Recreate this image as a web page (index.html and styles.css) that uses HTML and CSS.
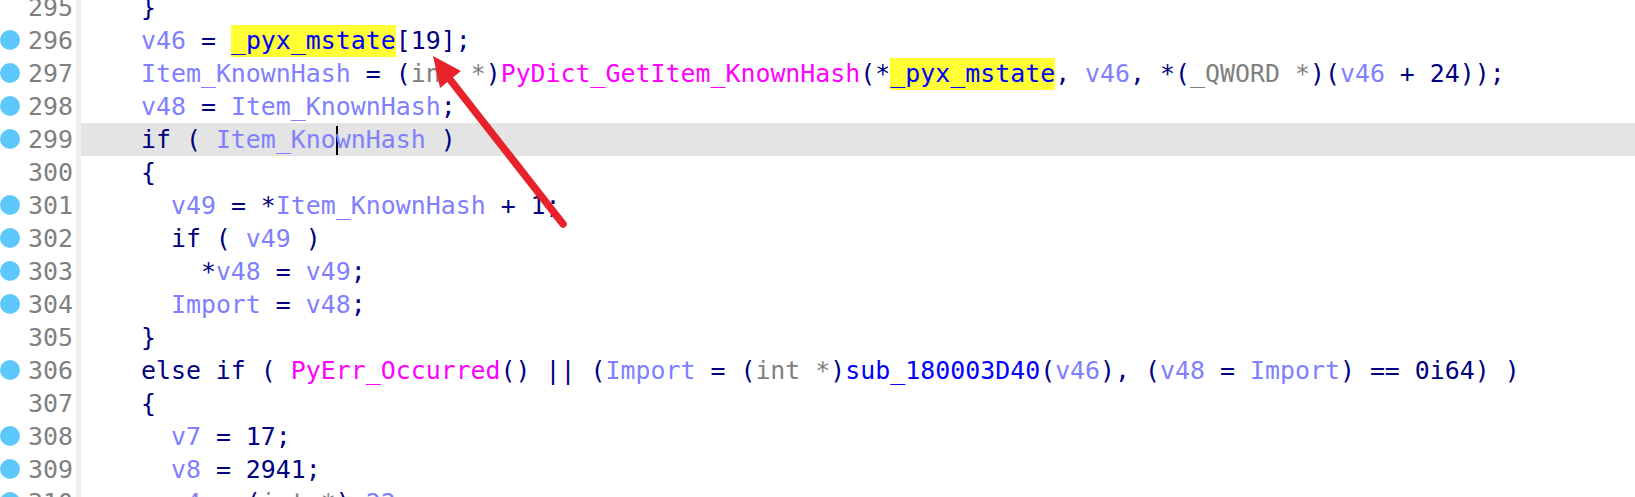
FILE: index.html
```html
<!DOCTYPE html>
<html lang="en">
<head>
    <meta charset="UTF-8">
    <title>Pseudocode</title>
    <link rel="stylesheet" href="styles.css">
</head>
<body>
    <div class="view">
        <div class="lines">
            <div class="row"><span class="gut"><span class="num">295</span></span><span class="code">    }</span></div>
            <div class="row"><span class="gut"><i class="bp"></i><span class="num">296</span></span><span class="code">    <span class="v">v46</span> = <span class="g">_pyx_mstate</span>[19];</span></div>
            <div class="row"><span class="gut"><i class="bp"></i><span class="num">297</span></span><span class="code">    <span class="v">Item_KnownHash</span> = (<span class="t">int *</span>)<span class="f">PyDict_GetItem_KnownHash</span>(*<span class="g">_pyx_mstate</span>, <span class="v">v46</span>, *(<span class="t">_QWORD *</span>)(<span class="v">v46</span> + 24));</span></div>
            <div class="row"><span class="gut"><i class="bp"></i><span class="num">298</span></span><span class="code">    <span class="v">v48</span> = <span class="v">Item_KnownHash</span>;</span></div>
            <div class="row"><span class="gut"><i class="bp"></i><span class="num">299</span></span><span class="code current">    if ( <span class="v">Item_Kno<b class="caret"></b>wnHash</span> )</span></div>
            <div class="row"><span class="gut"><span class="num">300</span></span><span class="code">    {</span></div>
            <div class="row"><span class="gut"><i class="bp"></i><span class="num">301</span></span><span class="code">      <span class="v">v49</span> = *<span class="v">Item_KnownHash</span> + 1;</span></div>
            <div class="row"><span class="gut"><i class="bp"></i><span class="num">302</span></span><span class="code">      if ( <span class="v">v49</span> )</span></div>
            <div class="row"><span class="gut"><i class="bp"></i><span class="num">303</span></span><span class="code">        *<span class="v">v48</span> = <span class="v">v49</span>;</span></div>
            <div class="row"><span class="gut"><i class="bp"></i><span class="num">304</span></span><span class="code">      <span class="v">Import</span> = <span class="v">v48</span>;</span></div>
            <div class="row"><span class="gut"><span class="num">305</span></span><span class="code">    }</span></div>
            <div class="row"><span class="gut"><i class="bp"></i><span class="num">306</span></span><span class="code">    else if ( <span class="f">PyErr_Occurred</span>() || (<span class="v">Import</span> = (<span class="t">int *</span>)<span class="s">sub_180003D40</span>(<span class="v">v46</span>), (<span class="v">v48</span> = <span class="v">Import</span>) == 0i64) )</span></div>
            <div class="row"><span class="gut"><span class="num">307</span></span><span class="code">    {</span></div>
            <div class="row"><span class="gut"><i class="bp"></i><span class="num">308</span></span><span class="code">      <span class="v">v7</span> = 17;</span></div>
            <div class="row"><span class="gut"><i class="bp"></i><span class="num">309</span></span><span class="code">      <span class="v">v8</span> = 2941;</span></div>
            <div class="row"><span class="gut"><i class="bp"></i><span class="num">310</span></span><span class="code">      <span class="v">v4</span> = (<span class="t">int *</span>)<span class="v">v22</span>;</span></div>
        </div>

        <!-- annotation arrow drawn on top of the listing -->
        <svg class="arrow" width="1635" height="497" viewBox="0 0 1635 497">
            <line x1="563" y1="224" x2="448" y2="77" stroke="#e8222b" stroke-width="7.5" stroke-linecap="round"/>
            <polygon points="433,56 461,71 440,88" fill="#e8222b"/>
        </svg>
    </div>
</body>
</html>
```

FILE: styles.css
```css
html, body {
    margin: 0;
    padding: 0;
    background: #ffffff;
    overflow: hidden;
}

.view {
    position: relative;
    width: 1635px;
    height: 497px;
    overflow: hidden;
}

.lines {
    display: flex;
    flex-direction: column;
    margin-top: -9.5px;
    font-family: "DejaVu Sans Mono", "Liberation Mono", monospace;
    font-size: 24.9px;
    color: #000080;
}

.row {
    display: flex;
    height: 33px;
    line-height: 33px;
}

.gut {
    width: 76px;
    flex: none;
    display: flex;
    align-items: center;
    padding-right: 3px;
    box-sizing: border-box;
}

.num {
    margin-left: auto;
    color: #808080;
}

.bp {
    width: 20px;
    height: 20px;
    border-radius: 50%;
    background: #5cc8fb;
}

.code {
    flex: 1;
    white-space: pre;
    border-left: 5px solid #efefef;
    background-clip: padding-box;
}

.code.current {
    background-color: #e4e4e4;
}

.v { color: #8080ff; }
.f { color: #ff00ff; }
.s { color: #0000ff; }
.t { color: #808080; }

.g {
    color: #0000ff;
    background: #ffff33;
    display: inline-block;
    line-height: 32px;
}

.caret {
    display: inline-block;
    width: 0;
    height: 29px;
    border-left: 2px solid #000000;
    margin-right: -2px;
    vertical-align: middle;
}

.arrow {
    position: absolute;
    left: 0;
    top: 0;
}
```
